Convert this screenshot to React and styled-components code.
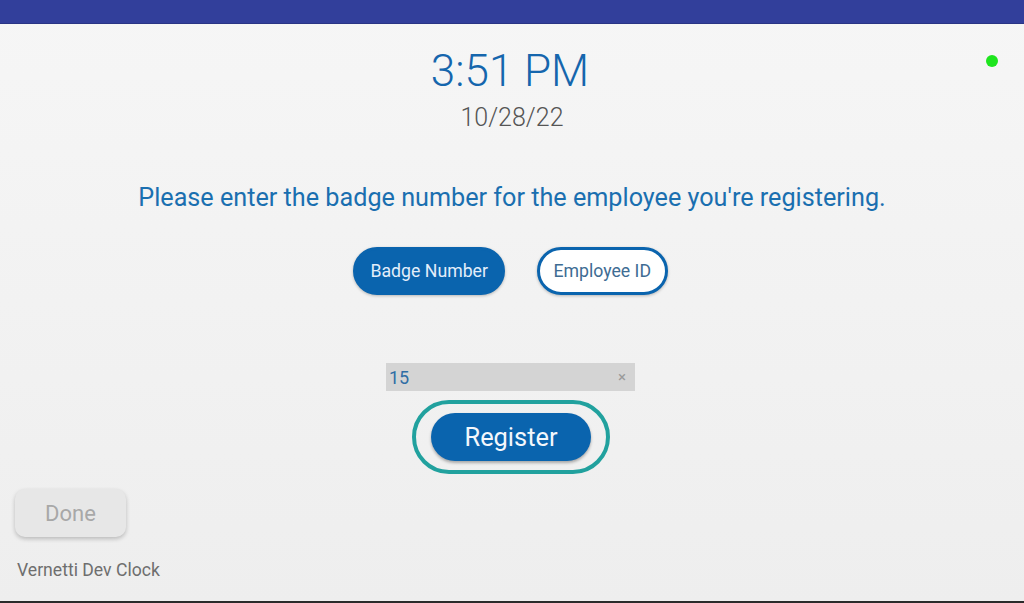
import React from "react";
import styled, { createGlobalStyle } from "styled-components";

const Global = createGlobalStyle`
  html, body, #root {
    margin: 0;
    padding: 0;
    height: 100%;
  }
  body {
    font-family: Roboto, "Liberation Sans", sans-serif;
    overflow: hidden;
  }
`;

const Screen = styled.div`
  width: 1024px;
  height: 603px;
  display: flex;
  flex-direction: column;
  background: linear-gradient(180deg, #f6f6f6 0%, #eeeeee 100%);
  position: relative;
`;

const TopBar = styled.div`
  height: 23px;
  flex: none;
  background: #323f9b;
  border-bottom: 1px solid #2a3585;
`;

const Body = styled.main`
  flex: 1;
  display: flex;
  flex-direction: column;
  align-items: center;
  padding-top: 20px;
`;

const Time = styled.div`
  font-size: 44px;
  font-weight: 300;
  color: #1566ad;
  line-height: 54px;
  margin-left: -4px;
`;

const DateLine = styled.div`
  font-size: 25px;
  font-weight: 300;
  color: #555;
  line-height: 30px;
  margin-top: 5px;
`;

const Prompt = styled.p`
  margin: 49px 0 0;
  font-size: 25.2px;
  font-weight: 400;
  color: #1a6fb0;
  line-height: 32px;
`;

const Toggle = styled.div`
  display: flex;
  gap: 32px;
  margin-top: 33px;
  margin-left: -3px;
`;

const Pill = styled.button`
  height: 48px;
  padding: 0 ${(p) => (p.$active ? "14px" : "13.5px")};
  border-radius: 24px;
  font-family: inherit;
  font-size: 17.7px;
  cursor: pointer;
  box-shadow: 0 1px 3px rgba(0, 0, 0, 0.25);
  background: ${(p) => (p.$active ? "#0a64ae" : "#ffffff")};
  color: ${(p) => (p.$active ? "#e3eefa" : "#3e6c93")};
  border: 3px solid #0a64ae;
`;

const Field = styled.div`
  margin-top: 68px;
  margin-left: -3px;
  width: 249px;
  height: 28px;
  background: #d4d4d4;
  display: flex;
  align-items: center;
  justify-content: space-between;
  padding: 0 9px 0 3px;
  box-sizing: border-box;
  font-size: 18px;
  color: #2f6ea5;
`;

const Clear = styled.span`
  font-size: 15px;
  color: #9a9a9a;
`;

const Ring = styled.div`
  margin-top: 9px;
  margin-left: -2px;
  padding: 9px 15px;
  border: 4px solid #21a19e;
  border-radius: 40px;
`;

const RegisterButton = styled.button`
  display: block;
  width: 160px;
  height: 48px;
  border: none;
  border-radius: 24px;
  background: #0a64ae;
  color: #f3f7fc;
  font-family: inherit;
  font-size: 25.4px;
  cursor: pointer;
  box-shadow: 0 2px 3px rgba(0, 0, 0, 0.3);
`;

const Footer = styled.footer`
  display: flex;
  flex-direction: column;
  align-items: flex-start;
  padding: 0 0 21px 15px;
`;

const DoneButton = styled.button`
  width: 111px;
  height: 48px;
  border: none;
  border-radius: 10px;
  background: #e7e7e7;
  color: #a8a8a8;
  font-family: inherit;
  font-size: 22px;
  box-shadow: 0 2px 4px rgba(0, 0, 0, 0.22);
`;

const Station = styled.div`
  margin-top: 23px;
  margin-left: 2px;
  font-size: 17.6px;
  color: #6e6e6e;
`;

const BottomEdge = styled.div`
  height: 2px;
  background: #2b2b2b;
`;

const StatusDot = styled.span`
  position: absolute;
  top: 55px;
  right: 26px;
  width: 12px;
  height: 12px;
  border-radius: 50%;
  background: #1ee51e;
`;

export default function App() {
  return (
    <>
      <Global />
      <Screen>
        <TopBar />
        <StatusDot />
        <Body>
          <Time>3:51 PM</Time>
          <DateLine>10/28/22</DateLine>
          <Prompt>Please enter the badge number for the employee you're registering.</Prompt>
          <Toggle>
            <Pill $active>Badge Number</Pill>
            <Pill>Employee ID</Pill>
          </Toggle>
          <Field>
            <span>15</span>
            <Clear>×</Clear>
          </Field>
          <Ring>
            <RegisterButton>Register</RegisterButton>
          </Ring>
        </Body>
        <Footer>
          <DoneButton>Done</DoneButton>
          <Station>Vernetti Dev Clock</Station>
        </Footer>
        <BottomEdge />
      </Screen>
    </>
  );
}
